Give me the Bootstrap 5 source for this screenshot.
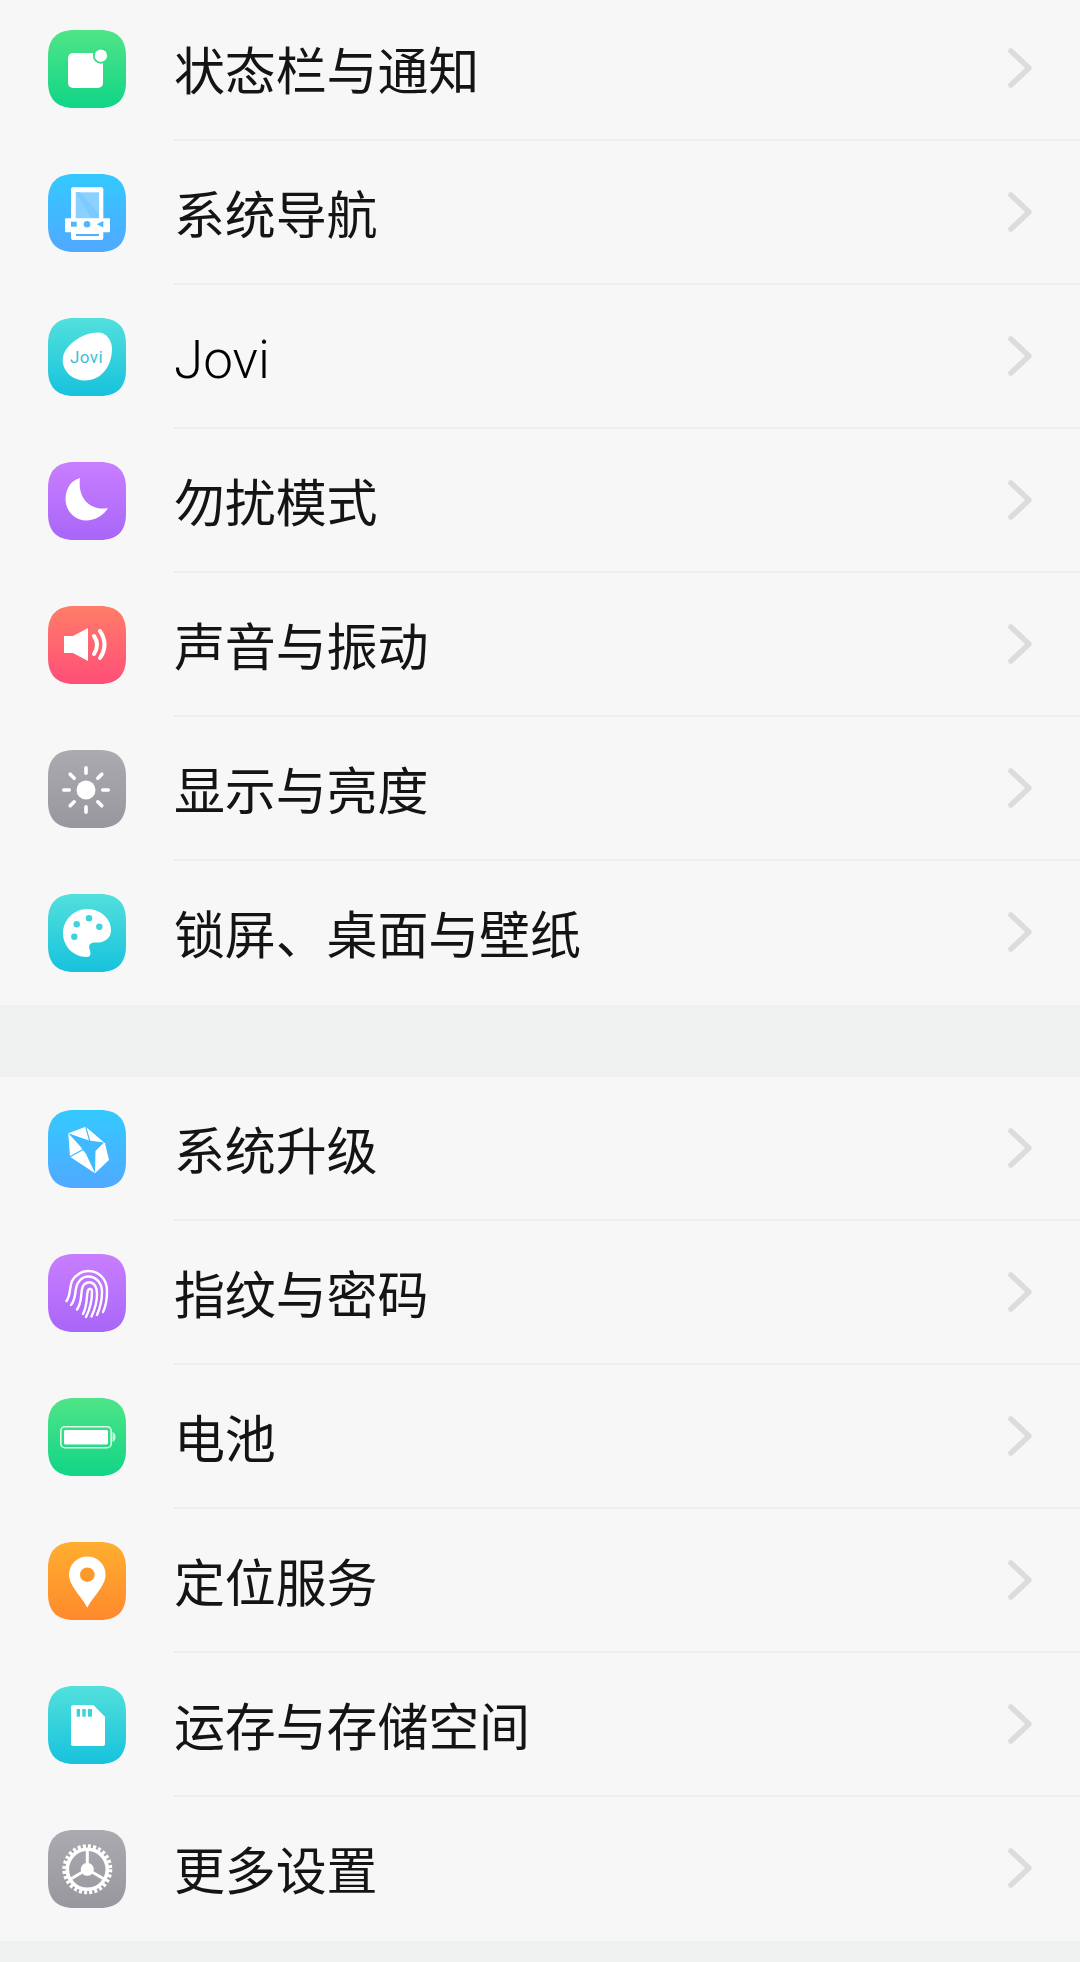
<!DOCTYPE html>
<html lang="zh-CN">
<head>
<meta charset="utf-8">
<title>设置</title>
<link rel="stylesheet" href="https://cdn.jsdelivr.net/npm/bootstrap@5.3.0/dist/css/bootstrap.min.css">
<style>
html,body{background:#f7f7f7;}
body{font-family:"Noto Sans CJK SC","Liberation Sans",sans-serif;color:#141414;overflow:hidden;}
.defs-holder{position:absolute;width:0;height:0;}
.first-group{margin-top:-3px;}
.set-group{--bs-list-group-bg:#f7f7f7;--bs-list-group-border-width:0;--bs-list-group-item-padding-x:0;--bs-list-group-item-padding-y:0;--bs-list-group-border-radius:0;}
.set-row{height:144px;padding-left:48px !important;color:#141414;}
.set-icon{width:78px;height:78px;flex:none;display:block;}
.set-body{margin-left:48px;border-bottom:2px solid #ededed;padding-right:46px;}
.set-row:last-child .set-body{border-bottom-color:transparent;}
.set-label{font-size:51px;font-weight:400;line-height:1;letter-spacing:-.15px;}
.latin-label{font-family:"Roboto","Liberation Sans",sans-serif;font-size:53px;font-weight:300;color:#000;padding-top:8px;letter-spacing:0;}
.set-chev{width:26px;height:40px;flex:none;}
.group-gap{background:#eff1f0;height:72px;}
.group-gap-end{background:#eff1f0;height:21px;}
.jovi-text{font-family:"Roboto","Liberation Sans",sans-serif;font-size:17px;font-weight:400;fill:#3cbfd4;letter-spacing:.4px;}
</style>
</head>
<body>
<svg class="defs-holder" aria-hidden="true">
<defs>
<linearGradient id="gGreen" x1="0" y1="0" x2="0" y2="1"><stop offset="0" stop-color="#50e488"/><stop offset="1" stop-color="#10d586"/></linearGradient>
<linearGradient id="gBlue" x1="0" y1="0" x2="0" y2="1"><stop offset="0" stop-color="#34c9ff"/><stop offset="1" stop-color="#50a9ff"/></linearGradient>
<linearGradient id="gTeal" x1="0" y1="0" x2="0" y2="1"><stop offset="0" stop-color="#52e0dc"/><stop offset="1" stop-color="#17c2dc"/></linearGradient>
<linearGradient id="gPurple" x1="0" y1="0" x2="0" y2="1"><stop offset="0" stop-color="#c97eff"/><stop offset="1" stop-color="#a866f8"/></linearGradient>
<linearGradient id="gRed" x1="0" y1="0" x2="0" y2="1"><stop offset="0" stop-color="#ff7d68"/><stop offset="1" stop-color="#ff4e78"/></linearGradient>
<linearGradient id="gGrey" x1="0" y1="0" x2="0" y2="1"><stop offset="0" stop-color="#abaab0"/><stop offset="1" stop-color="#97979d"/></linearGradient>
<linearGradient id="gOrange" x1="0" y1="0" x2="0" y2="1"><stop offset="0" stop-color="#ffae30"/><stop offset="1" stop-color="#ff892c"/></linearGradient>
<path id="sq" d="M26 0H52C69 0 78 9 78 26V52C78 69 69 78 52 78H26C9 78 0 69 0 52V26C0 9 9 0 26 0Z"/>
<path id="chev" d="M3 3L21 20L3 37" fill="none" stroke="#dcdcdc" stroke-width="5.5" stroke-linecap="round" stroke-linejoin="round"/>
</defs>
</svg>

<div class="list-group list-group-flush set-group first-group">
  <div class="list-group-item d-flex align-items-center set-row">
    <svg class="set-icon" viewBox="0 0 78 78"><use href="#sq" fill="url(#gGreen)"/><rect x="20" y="23" width="35" height="35" rx="5" fill="#fff"/><circle cx="52.900" cy="25.700" r="8" fill="#38de87"/><circle cx="52.900" cy="25.700" r="6.200" fill="#fff"/></svg>
    <div class="set-body flex-grow-1 align-self-stretch d-flex align-items-center justify-content-between"><span class="set-label">状态栏与通知</span><svg class="set-chev" viewBox="0 0 26 40"><use href="#chev"/></svg></div>
  </div>
  <div class="list-group-item d-flex align-items-center set-row">
    <svg class="set-icon" viewBox="0 0 78 78"><use href="#sq" fill="url(#gBlue)"/><rect x="23" y="13.300" width="32.300" height="52.700" rx="2" fill="#fff"/><rect x="27.700" y="18.300" width="23.300" height="27" fill="#8ad1ff"/><path d="M27.700 18.300H32L51 40V45.300H44Z" fill="#7ccaff"/><rect x="17" y="44.300" width="45" height="14" rx="1" fill="#fff"/><rect x="23" y="47.700" width="5.700" height="5" fill="#4eb8ff"/><circle cx="39" cy="50.300" r="3.300" fill="#4eb8ff"/><path d="M48.700 50.300L55.300 47V53.500Z" fill="#4eb8ff"/><rect x="28" y="60" width="23" height="2" fill="#4eb0ff"/></svg>
    <div class="set-body flex-grow-1 align-self-stretch d-flex align-items-center justify-content-between"><span class="set-label">系统导航</span><svg class="set-chev" viewBox="0 0 26 40"><use href="#chev"/></svg></div>
  </div>
  <div class="list-group-item d-flex align-items-center set-row">
    <svg class="set-icon" viewBox="0 0 78 78"><use href="#sq" fill="url(#gTeal)"/><path d="M50 14.500C58 14.500 64 22 64 31C64 47 54 62.500 37 62.500C24 62.500 14.700 53 14.700 42C14.700 28 34 14.500 50 14.500Z" fill="#fff"/><text class="jovi-text" x="38.500" y="44.500" text-anchor="middle">Jovi</text></svg>
    <div class="set-body flex-grow-1 align-self-stretch d-flex align-items-center justify-content-between"><span class="set-label latin-label">Jovi</span><svg class="set-chev" viewBox="0 0 26 40"><use href="#chev"/></svg></div>
  </div>
  <div class="list-group-item d-flex align-items-center set-row">
    <svg class="set-icon" viewBox="0 0 78 78"><use href="#sq" fill="url(#gPurple)"/><path transform="translate(-1 0)" d="M33 16C22 19 18.500 29 18.500 37C18.500 49 28 58.500 39 58.500C48 58.500 57 53 61 46C48 49 30 41 33 16Z" fill="#fff"/></svg>
    <div class="set-body flex-grow-1 align-self-stretch d-flex align-items-center justify-content-between"><span class="set-label">勿扰模式</span><svg class="set-chev" viewBox="0 0 26 40"><use href="#chev"/></svg></div>
  </div>
  <div class="list-group-item d-flex align-items-center set-row">
    <svg class="set-icon" viewBox="0 0 78 78"><use href="#sq" fill="url(#gRed)"/><g transform="translate(-1 0)"><path d="M17 30H26L41 22V55L26 47H17Z" fill="#fff"/><path d="M47 30Q53 38.500 47 48M53 25Q62 38.500 53 52" fill="none" stroke="#fff" stroke-width="4" stroke-linecap="round"/></g></svg>
    <div class="set-body flex-grow-1 align-self-stretch d-flex align-items-center justify-content-between"><span class="set-label">声音与振动</span><svg class="set-chev" viewBox="0 0 26 40"><use href="#chev"/></svg></div>
  </div>
  <div class="list-group-item d-flex align-items-center set-row">
    <svg class="set-icon" viewBox="0 0 78 78"><use href="#sq" fill="url(#gGrey)"/><g transform="translate(-1 0)"><circle cx="39" cy="40" r="9.500" fill="#fff"/><path d="M39 17.700V23.300M39 56.700V62.300M16.700 40H22.300M55.700 40H61.300M23.200 24.200L27.200 28.200M50.800 51.800L54.800 55.800M23.200 55.800L27.200 51.800M50.800 28.200L54.800 24.200" stroke="#fff" stroke-width="3.600" stroke-linecap="round"/></g></svg>
    <div class="set-body flex-grow-1 align-self-stretch d-flex align-items-center justify-content-between"><span class="set-label">显示与亮度</span><svg class="set-chev" viewBox="0 0 26 40"><use href="#chev"/></svg></div>
  </div>
  <div class="list-group-item d-flex align-items-center set-row">
    <svg class="set-icon" viewBox="0 0 78 78"><use href="#sq" fill="url(#gTeal)"/><g transform="translate(-1 0)"><path d="M40 15C54 15 64 25 64 36C64 46 55 49 49 48.500C44 48.500 41 50 42.500 55C44 59 44 63 40 63C26 63 16 52 16 39C16 26 27 15 40 15Z" fill="#fff"/><g fill="#3dd2dc"><circle cx="29.700" cy="30.300" r="3.200"/><circle cx="42" cy="24.300" r="3.200"/><circle cx="52.300" cy="32.700" r="3.200"/><circle cx="27.300" cy="42.700" r="3.200"/></g></g></svg>
    <div class="set-body flex-grow-1 align-self-stretch d-flex align-items-center justify-content-between"><span class="set-label">锁屏、桌面与壁纸</span><svg class="set-chev" viewBox="0 0 26 40"><use href="#chev"/></svg></div>
  </div>
</div>

<div class="group-gap"></div>

<div class="list-group list-group-flush set-group">
  <div class="list-group-item d-flex align-items-center set-row">
    <svg class="set-icon" viewBox="0 0 78 78"><use href="#sq" fill="url(#gBlue)"/><path d="M20.300 23.300L37.700 16.700L57 33.300L61 50L47 63.300L22 46.700Z" fill="#fff"/><path d="M20.300 23.300L41 30.500L56 32.500L47.500 41L47 63L38 44L32 36Z" fill="#3fb9ff"/><path d="M37.700 16.700L42 32M22 46.700L36 39" stroke="#3fb9ff" stroke-width="1.200" fill="none"/></svg>
    <div class="set-body flex-grow-1 align-self-stretch d-flex align-items-center justify-content-between"><span class="set-label">系统升级</span><svg class="set-chev" viewBox="0 0 26 40"><use href="#chev"/></svg></div>
  </div>
  <div class="list-group-item d-flex align-items-center set-row">
    <svg class="set-icon" viewBox="0 0 78 78"><use href="#sq" fill="url(#gPurple)"/><g transform="translate(-1 0)" fill="none" stroke="#fff" stroke-width="2.400" stroke-linecap="round"><path d="M19.500 47C24 41 22 34 25 27C29 20 36 17 41 17C52 17 60 25 60 37C60 45 59 52 56 58"/><path d="M24 51C30 44 27 35 31 29C34 24 38 22.500 41 22.500C50 22.500 55 30 55 38C55 46 53 54 50 61"/><path d="M30 55.500C36 47 33 38 36 32C38 28.500 42 28 44 28.500C49 30 50 36 50 40C50 48 48 55 44.500 62.500"/><path d="M36 60C41 50 39 42 41 36.500C42 34 45 34 45 38C45 47 43 55 39 63"/></g></svg>
    <div class="set-body flex-grow-1 align-self-stretch d-flex align-items-center justify-content-between"><span class="set-label">指纹与密码</span><svg class="set-chev" viewBox="0 0 26 40"><use href="#chev"/></svg></div>
  </div>
  <div class="list-group-item d-flex align-items-center set-row">
    <svg class="set-icon" viewBox="0 0 78 78"><use href="#sq" fill="url(#gGreen)"/><g transform="translate(-1 0)"><rect x="13.800" y="28.800" width="50.400" height="20.900" rx="4" fill="none" stroke="#dcfbe8" stroke-width="1.600"/><rect x="17" y="32" width="44" height="14.500" rx="1.500" fill="#fff"/><path d="M65.500 34C67.500 34.500 68.500 36.500 68.500 39C68.500 41.500 67.500 43.500 65.500 44Z" fill="#c8f6db"/></g></svg>
    <div class="set-body flex-grow-1 align-self-stretch d-flex align-items-center justify-content-between"><span class="set-label">电池</span><svg class="set-chev" viewBox="0 0 26 40"><use href="#chev"/></svg></div>
  </div>
  <div class="list-group-item d-flex align-items-center set-row">
    <svg class="set-icon" viewBox="0 0 78 78"><use href="#sq" fill="url(#gOrange)"/><g transform="translate(-1 0)"><path d="M40.300 65.700C36 56 22 44 22 32.700A18.300 18.300 0 0 1 58.600 32.700C58.600 44 45 56 40.300 65.700Z" fill="#fff"/><circle cx="40.300" cy="32.700" r="7.300" fill="#fd992c"/></g></svg>
    <div class="set-body flex-grow-1 align-self-stretch d-flex align-items-center justify-content-between"><span class="set-label">定位服务</span><svg class="set-chev" viewBox="0 0 26 40"><use href="#chev"/></svg></div>
  </div>
  <div class="list-group-item d-flex align-items-center set-row">
    <svg class="set-icon" viewBox="0 0 78 78"><use href="#sq" fill="url(#gTeal)"/><g transform="translate(-1 0)"><path d="M26 19H46.300L58 30.700V58C58 59.500 57 60 56 60H26C25 60 24 59.500 24 58V21C24 20 25 19 26 19Z" fill="#fff"/><g fill="#38d3dd"><rect x="29.700" y="23" width="3.300" height="7.700"/><rect x="35.300" y="23" width="3.400" height="7.700"/><rect x="41" y="23" width="4" height="7.700"/></g></g></svg>
    <div class="set-body flex-grow-1 align-self-stretch d-flex align-items-center justify-content-between"><span class="set-label">运存与存储空间</span><svg class="set-chev" viewBox="0 0 26 40"><use href="#chev"/></svg></div>
  </div>
  <div class="list-group-item d-flex align-items-center set-row">
    <svg class="set-icon" viewBox="0 0 78 78"><use href="#sq" fill="url(#gGrey)"/><g transform="translate(-1 0)"><circle cx="40.300" cy="39.300" r="20" fill="none" stroke="#fff" stroke-width="3.600"/><circle cx="40.300" cy="39.300" r="23" fill="none" stroke="#fff" stroke-width="4" stroke-dasharray="3 2.160"/><circle cx="40.300" cy="39.300" r="6.500" fill="#fff"/><path d="M40.300 39.300V19.500M40.300 39.300L23.200 49.200M40.300 39.300L57.400 49.200" stroke="#fff" stroke-width="3"/></g></svg>
    <div class="set-body flex-grow-1 align-self-stretch d-flex align-items-center justify-content-between"><span class="set-label">更多设置</span><svg class="set-chev" viewBox="0 0 26 40"><use href="#chev"/></svg></div>
  </div>
</div>
<div class="group-gap-end"></div>
<script src="https://cdn.jsdelivr.net/npm/bootstrap@5.3.0/dist/js/bootstrap.bundle.min.js"></script>
</body>
</html>
